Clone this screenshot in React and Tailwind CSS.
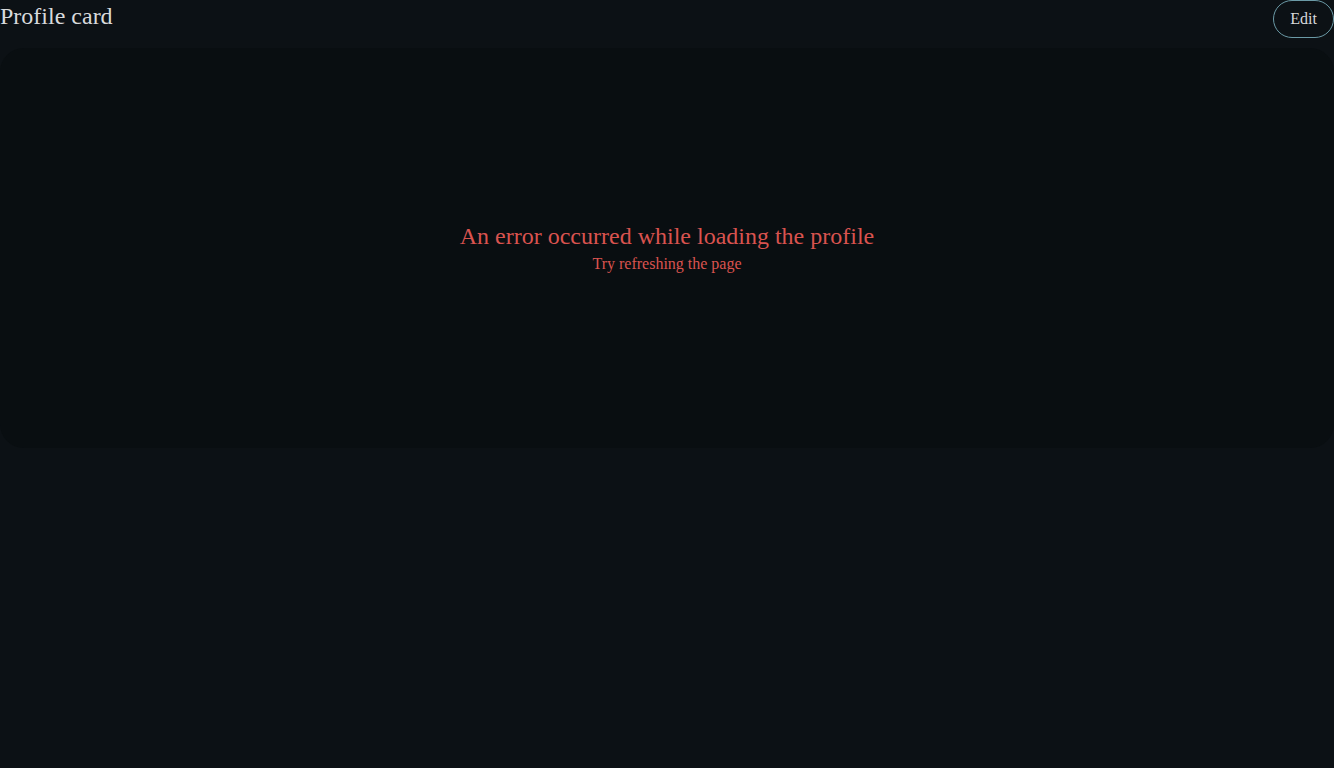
export default function App() {
  return (
    <div className="min-h-[768px] w-full bg-[#0c1115] text-[#e5e7eb]" style={{ fontFamily: '"Liberation Serif", serif' }}>
      <div className="flex items-start justify-between">
        <h1 className="text-[24px] leading-[32px] text-[#d8dadc]">Profile card</h1>
        <button className="h-[38px] rounded-full border border-[#6b9aa6] px-4 text-[16px] text-[#d8dadc]">Edit</button>
      </div>
      <div className="mt-[10px] flex h-[400px] flex-col items-center justify-center rounded-[24px] bg-[#090e11]">
        <p className="text-[24px] leading-[32px] text-[#d9534f]">An error occurred while loading the profile</p>
        <p className="text-[16px] leading-[24px] text-[#d9534f]">Try refreshing the page</p>
      </div>
    </div>
  );
}
